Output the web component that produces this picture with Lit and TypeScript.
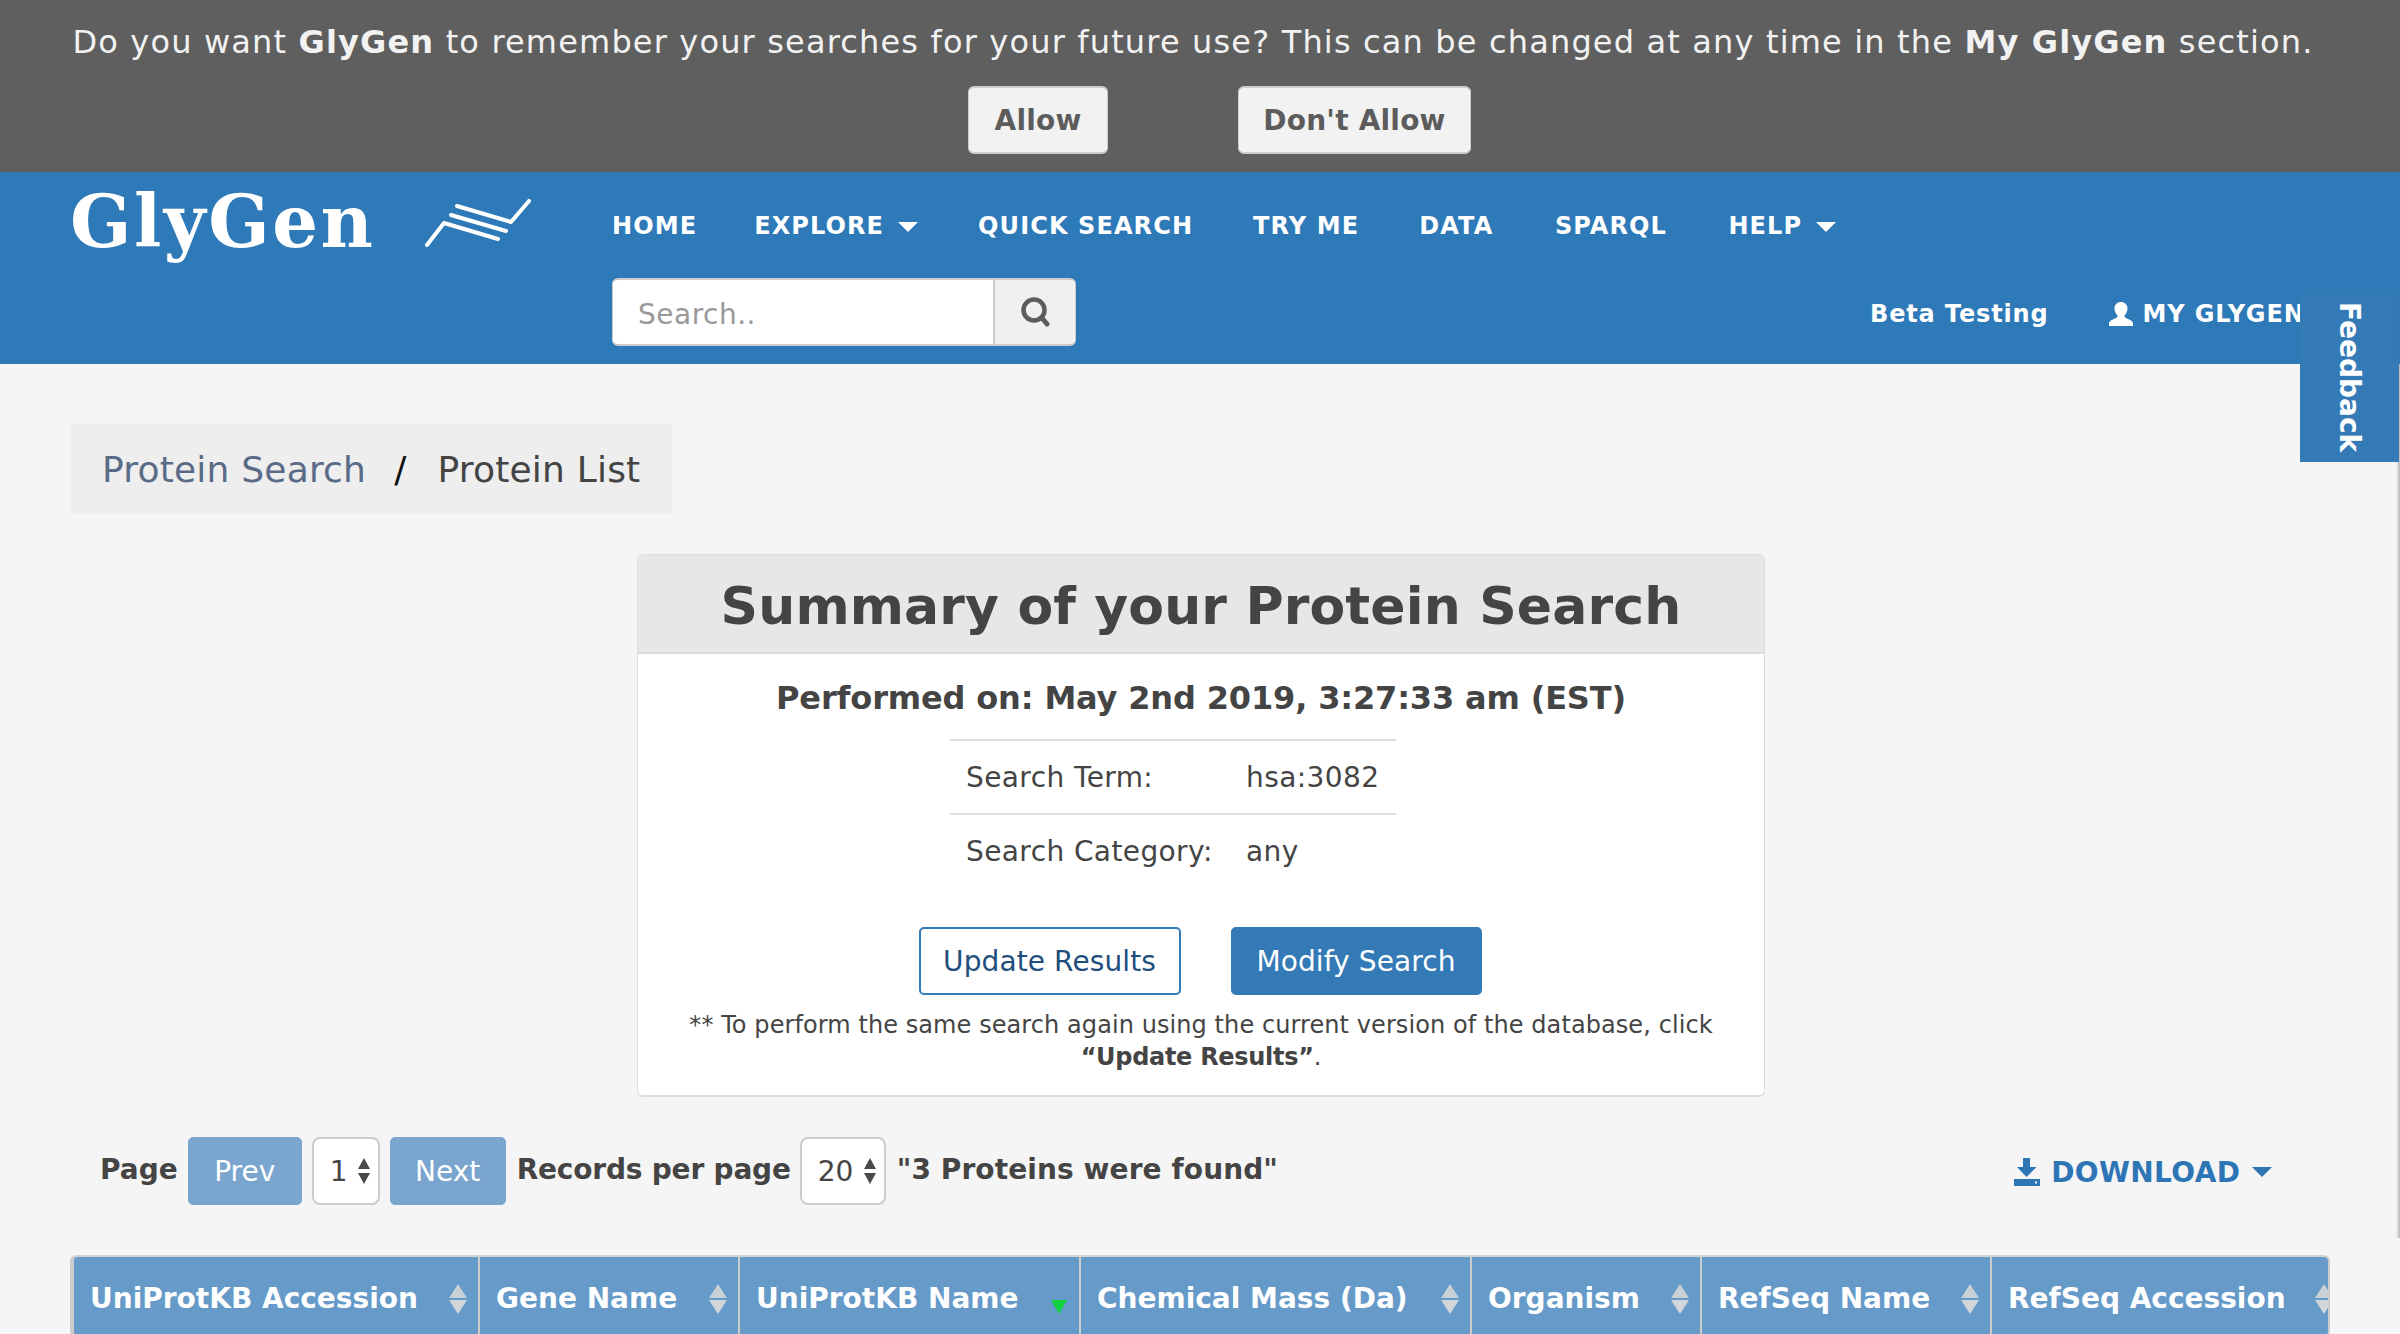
import { LitElement, css, html, svg } from 'lit';
import { customElement } from 'lit/decorators.js';

const COLUMNS = [
  { label: 'UniProtKB Accession', width: 404, sort: 'none' },
  { label: 'Gene Name', width: 260, sort: 'none' },
  { label: 'UniProtKB Name', width: 341, sort: 'down' },
  { label: 'Chemical Mass (Da)', width: 391, sort: 'none' },
  { label: 'Organism', width: 230, sort: 'none' },
  { label: 'RefSeq Name', width: 290, sort: 'none' },
  { label: 'RefSeq Accession', width: 354, sort: 'none' },
];

// Up and down arrows of the small number boxes.
const spinner = html`<svg class="spin" viewBox="0 0 14 26">
  <path d="M7 0 L13 11 H1 Z M7 26 L1 15 H13 Z" fill="#4a4a4a"></path>
</svg>`;

const searchIcon = svg`<circle cx="14" cy="13" r="10.5" fill="none" stroke="#5c5c5c" stroke-width="4.5"></circle>
  <path fill="none" stroke="#5c5c5c" stroke-width="5" stroke-linecap="round" d="M22 21 L27 27"></path>`;

/**
 * GlyGen protein list page.
 */
@customElement('app-root')
export class AppRoot extends LitElement {
  render() {
    return html`
      <div class="page">
        <div class="banner">
          <p class="banner-text">
            Do you want <b>GlyGen</b> to remember your searches for your future use? This can be
            changed at any time in the <b>My GlyGen</b> section.
          </p>
          <div class="banner-actions">
            <button class="grey-btn allow">Allow</button>
            <button class="grey-btn deny">Don't Allow</button>
          </div>
        </div>

        <header class="navbar">
          <div class="brand">
            <span class="logo-text">GlyGen</span>
            <svg class="logo-mark" viewBox="0 0 110 50">
              <path
                d="M2 46 L19 24 L73 40 M26 16 L81 32 M32 7 L86 23 L104 2"
                fill="none"
                stroke="#fff"
                stroke-width="4"
                stroke-linecap="round"
                stroke-linejoin="round"
              ></path>
            </svg>
          </div>
          <div class="nav-main">
            <nav class="menu">
              <a>HOME</a>
              <a>EXPLORE<i class="caret"></i></a>
              <a>QUICK SEARCH</a>
              <a>TRY ME</a>
              <a>DATA</a>
              <a class="nudge">SPARQL</a>
              <a class="nudge">HELP<i class="caret"></i></a>
            </nav>
            <div class="nav-second">
              <div class="search-group">
                <div class="search-input">Search..</div>
                <div class="search-btn">
                  <svg viewBox="0 0 30 30" width="30" height="30">${searchIcon}</svg>
                </div>
              </div>
              <div class="nav-right">
                <a class="beta">Beta Testing</a>
                <a class="mine">
                  <svg viewBox="0 0 24 24" width="24" height="24">
                    <path
                      fill="#fff"
                      d="M12 0c3.500 0 6.500 2.500 6.500 6.500 0 3-1.500 5.500-3 7 0 1.500.5 2 2 2.800 2.500 1.200 6.500 2.700 6.500 5V24H0v-2.700c0-2.300 4-3.800 6.500-5 1.500-.8 2-1.300 2-2.800-1.500-1.500-3-4-3-7C5.500 2.500 8.500 0 12 0Z"
                    ></path>
                  </svg>
                  MY GLYGEN
                </a>
              </div>
            </div>
          </div>
        </header>

        <div class="edge"></div>
        <a class="feedback"><span>Feedback</span></a>

        <main class="content">
          <div class="breadcrumb">
            <a>Protein Search</a><span class="slash">/</span><span>Protein List</span>
          </div>

          <section class="card">
            <h1 class="card-title">Summary of your Protein Search</h1>
            <h2 class="performed">Performed on: May 2nd 2019, 3:27:33 am (EST)</h2>
            <div class="details">
              <div class="detail-row">
                <span class="detail-label">Search Term:</span><span>hsa:3082</span>
              </div>
              <div class="detail-row">
                <span class="detail-label">Search Category:</span><span>any</span>
              </div>
            </div>
            <div class="card-actions">
              <button class="outline-btn">Update Results</button>
              <button class="solid-btn">Modify Search</button>
            </div>
            <p class="note">
              ** To perform the same search again using the current version of the database, click
              <br /><b>“Update Results”</b>.
            </p>
          </section>

          <div class="pager">
            <b>Page</b>
            <button class="page-btn prev">Prev</button>
            <div class="num-box one">1${spinner}</div>
            <button class="page-btn next">Next</button>
            <b class="records">Records per page</b>
            <div class="num-box twenty">20${spinner}</div>
            <b class="found">"3 Proteins were found"</b>
            <a class="download">
              <svg viewBox="0 0 26 28" width="26" height="28">
                <path fill="#2e75b6" d="M9 0h7v9h6.500L12.500 19 3 9h6ZM0 21h26v7H0Z"></path>
                <rect x="21" y="23.500" width="2" height="2" fill="#f5f5f5"></rect>
              </svg>
              DOWNLOAD<i class="caret blue"></i>
            </a>
          </div>

          <div class="results-wrap">
            <table class="results">
              <thead>
                <tr>
                  ${COLUMNS.map(
                    (col) => html`
                      <th style="width:${col.width}px">
                        <div class="th-inner">
                          <span>${col.label}</span>
                          ${col.sort === 'down'
                            ? html`<svg class="sort" viewBox="0 0 18 30">
                                <path d="M1 16 H17 L9 30 Z" fill="#12d140"></path>
                              </svg>`
                            : html`<svg class="sort soft" viewBox="0 0 18 30">
                                <path d="M9 0 L18 14 H0 Z" fill="#c9d0d6"></path>
                                <path d="M0 16 H18 L9 30 Z" fill="#d2d6da"></path>
                              </svg>`}
                        </div>
                      </th>
                    `,
                  )}
                </tr>
              </thead>
            </table>
          </div>
        </main>
      </div>
    `;
  }

  static styles = css`
    :host {
      display: block;
      font-family: 'DejaVu Sans', sans-serif;
      color: #444;
    }

    .page {
      position: relative;
      height: 1334px;
      overflow: hidden;
      background: #f5f5f5;
    }

    b {
      font-weight: 700;
    }

    .banner {
      height: 172px;
      box-sizing: border-box;
      padding: 22px 14px 0 0;
      background: #5f5f5f;
      color: #f2f2f2;
      text-align: center;
    }

    .banner-text {
      margin: 0;
      font-size: 32px;
      line-height: 40px;
      letter-spacing: 1.16px;
    }

    .banner-actions {
      display: flex;
      gap: 130px;
      margin: 24px 0 0 968px;
    }

    button {
      font-family: inherit;
      cursor: pointer;
    }

    .grey-btn {
      height: 68px;
      padding: 0;
      border: solid #ccc;
      border-width: 2px 1px;
      border-radius: 6px;
      background: #f2f2f2;
      color: #5c5c5c;
      font-size: 28px;
      font-weight: 700;
      letter-spacing: 0.2px;
    }

    .allow {
      width: 140px;
    }

    .deny {
      width: 233px;
    }

    .navbar {
      display: flex;
      height: 192px;
      background: #2e79b8;
      color: #fff;
    }

    .brand {
      display: flex;
      flex: none;
      width: 612px;
      box-sizing: border-box;
      padding-left: 70px;
      align-items: flex-start;
    }

    .logo-text {
      margin-top: 7px;
      font-family: 'DejaVu Serif', serif;
      font-size: 72px;
      line-height: 86px;
      font-weight: 700;
      letter-spacing: 2.5px;
    }

    .logo-mark {
      width: 110px;
      height: 50px;
      margin: 27px 0 0 50px;
    }

    .nav-main {
      flex: 1;
      min-width: 0;
    }

    .menu {
      display: flex;
      gap: 60px;
      height: 106px;
      padding-top: 2px;
      box-sizing: border-box;
      align-items: center;
      font-size: 24px;
      font-weight: 700;
      letter-spacing: 1.1px;
    }

    .menu a:first-child {
      margin-right: -3px;
    }

    .menu .nudge {
      margin-left: 1.5px;
    }

    .caret {
      display: inline-block;
      margin-left: 14px;
      vertical-align: middle;
      border-top: 10px solid #fff;
      border-left: 10px solid transparent;
      border-right: 10px solid transparent;
    }

    .caret.blue {
      border-top-color: #2e75b6;
    }

    .nav-second {
      display: flex;
      align-items: center;
      justify-content: space-between;
      height: 68px;
    }

    .search-group {
      display: flex;
      width: 464px;
      height: 68px;
      box-sizing: border-box;
      border: 1px solid #ccc;
      border-width: 2px 1px;
      border-radius: 6px;
      overflow: hidden;
      background: #fff;
    }

    .search-input {
      flex: 1;
      padding: 5px 0 0 25px;
      color: #999;
      font-size: 28px;
      line-height: 60px;
      letter-spacing: 0.5px;
    }

    .search-btn {
      display: flex;
      width: 80px;
      align-items: center;
      justify-content: center;
      border-left: 2px solid #ccc;
      background: #f0f0f0;
    }

    .nav-right {
      display: flex;
      gap: 60px;
      width: 530px;
      flex: none;
      padding-top: 3px;
      font-size: 24px;
      font-weight: 700;
      letter-spacing: 0.85px;
      white-space: nowrap;
    }

    .mine {
      display: flex;
      gap: 10px;
      align-items: center;
    }

    .feedback {
      position: absolute;
      top: 292px;
      left: 2300px;
      display: flex;
      width: 99px;
      height: 170px;
      align-items: center;
      justify-content: center;
      background: #337ab7;
      color: #fff;
      font-size: 28px;
      font-weight: 700;
    }

    .feedback span {
      writing-mode: vertical-rl;
    }

    .edge {
      position: absolute;
      top: 364px;
      right: 0;
      width: 4px;
      height: 874px;
      background: linear-gradient(to right, #f5f5f5, #b5b5b5);
    }

    .content {
      padding: 60px 70px 0;
    }

    .breadcrumb {
      display: inline-flex;
      height: 90px;
      box-sizing: border-box;
      padding: 0 32px;
      align-items: center;
      background: #eee;
      color: #444;
      font-size: 36px;
      letter-spacing: 0.2px;
    }

    .breadcrumb a {
      color: #5a6b87;
    }

    .slash {
      margin: 0 31px 0 28px;
      color: #111;
    }

    .card {
      width: 1128px;
      height: 543px;
      margin: 40px 0 0 567px;
      box-sizing: border-box;
      border: 1px solid #ddd;
      border-bottom-width: 2px;
      border-radius: 6px;
      background: #fff;
      text-align: center;
      overflow: hidden;
    }

    .card-title {
      margin: 0;
      height: 99px;
      border-bottom: 2px solid #ddd;
      box-sizing: border-box;
      background: #e7e7e7;
      font-size: 52px;
      line-height: 102px;
      font-weight: 700;
      letter-spacing: 0.15px;
    }

    .performed {
      margin: 0;
      height: 85px;
      font-size: 32px;
      line-height: 88px;
      font-weight: 700;
      letter-spacing: -0.15px;
    }

    .details {
      box-shadow: -1px 0 0 #ddd;
      height: 148px;
      padding-left: 312px;
      text-align: left;
      font-size: 28px;
      letter-spacing: 0.4px;
    }

    .detail-row {
      display: flex;
      width: 446px;
      height: 74px;
      box-sizing: border-box;
      padding-left: 16px;
      align-items: center;
      border-top: 2px solid #ddd;
    }

    .detail-label {
      width: 280px;
    }

    .card-actions {
      display: flex;
      gap: 50px;
      justify-content: center;
      margin-top: 40px;
      margin-left: -2px;
    }

    .outline-btn,
    .solid-btn {
      height: 68px;
      padding: 0;
      border: 2px solid #337ab7;
      border-radius: 5px;
      font-size: 28px;
      letter-spacing: 0.1px;
    }

    .outline-btn {
      width: 262px;
      background: #fff;
      color: #1e4f7c;
    }

    .solid-btn {
      width: 251px;
      background: #337ab7;
      color: #fff;
    }

    .note {
      margin: 14px 0 0;
      font-size: 24px;
      line-height: 32px;
      letter-spacing: 0.08px;
    }

    .note b {
      letter-spacing: -0.3px;
    }

    .pager {
      display: flex;
      height: 68px;
      margin: 40px 0 0 30px;
      align-items: center;
      font-size: 28px;
    }

    .pager b {
      position: relative;
      top: -1.5px;
    }

    .records {
      letter-spacing: -0.2px;
    }

    .found {
      letter-spacing: 0.1px;
    }

    .page-btn {
      height: 68px;
      padding: 0;
      border: 1px solid #7aa5cf;
      border-radius: 5px;
      background: #7aa5cf;
      color: #fff;
      font-size: 28px;
    }

    .prev {
      width: 114px;
      margin: 0 10px 0 10px;
    }

    .next {
      width: 116px;
      margin: 0 11px 0 10px;
    }

    .num-box {
      display: flex;
      height: 68px;
      box-sizing: border-box;
      align-items: center;
      justify-content: space-between;
      padding: 0 7px 0 16px;
      border: 2px solid #ccc;
      border-radius: 8px;
      background: #fff;
    }

    .one {
      width: 68px;
    }

    .twenty {
      width: 86px;
      margin: 0 11px 0 9px;
    }

    .spin {
      width: 14px;
      height: 26px;
    }

    .download {
      display: flex;
      gap: 11px;
      margin-left: auto;
      margin-right: 58.5px;
      padding-top: 2px;
      align-items: center;
      color: #2e75b6;
      font-weight: 700;
      letter-spacing: 0.4px;
    }

    .download .caret {
      margin-left: 0;
    }

    .results-wrap {
      width: 2260px;
      margin-top: 50px;
      box-sizing: border-box;
      border-top: 2px solid #d4d4d4;
      border-left: 4px solid #ccc;
      border-right: 2px solid #ccc;
      border-radius: 6px;
      overflow: hidden;
    }

    .results {
      width: 2270px;
      table-layout: fixed;
      border-collapse: separate;
      border-spacing: 0;
      background: #659ac9;
      color: #fff;
      font-size: 28px;
    }

    th {
      height: 80px;
      padding: 3px 0 0 16px;
      box-sizing: border-box;
      border-left: 2px solid #ccc;
      font-weight: 700;
      text-align: left;
      white-space: nowrap;
    }

    th:first-child {
      border-left: 0;
    }

    .th-inner {
      position: relative;
    }

    .sort {
      position: absolute;
      top: 50%;
      right: 11px;
      width: 18px;
      height: 30px;
      transform: translateY(-50%);
    }

    .sort.soft {
      filter: blur(0.6px);
    }
  `;
}
